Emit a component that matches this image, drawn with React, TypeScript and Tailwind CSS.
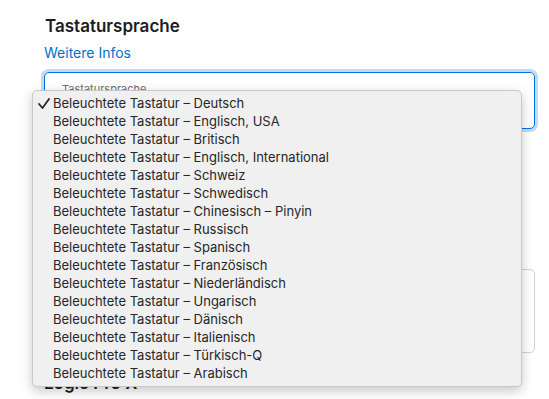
import React from 'react';

const items = [
  'Deutsch',
  'Englisch, USA',
  'Britisch',
  'Englisch, International',
  'Schweiz',
  'Schwedisch',
  'Chinesisch – Pinyin',
  'Russisch',
  'Spanisch',
  'Französisch',
  'Niederländisch',
  'Ungarisch',
  'Dänisch',
  'Italienisch',
  'Türkisch-Q',
  'Arabisch',
];

export default function App() {
  return (
    <div className="relative w-[549px] h-[399px] overflow-hidden bg-white font-['Inter','Liberation_Sans',sans-serif]">
      {/* Page content */}
      <div className="pl-[44px] pr-[14px] pt-[15px]">
        <h2 className="text-[17px] leading-[22px] font-semibold text-[#1d1d1f] pl-px">Tastatursprache</h2>
        <a className="block mt-[7px] text-[14px] leading-[18px] text-[#0070c9]">Weitere Infos</a>

        {/* Select box */}
        <div className="mt-[10px] h-[57px] rounded-[5px] border border-[#0071e3] ring-[3px] ring-[#0071e3]/25 px-[17px] pt-[9px]">
          <div className="text-[11px] leading-[14px] text-[#6e6e73]">Tastatursprache</div>
        </div>

        {/* Second card, mostly hidden */}
        <div className="mt-[140px] h-[84px] rounded-[5px] border border-[#d2d2d7]" />

        <h2 className="mt-[19px] text-[17px] leading-[22px] font-semibold text-[#1d1d1f]">Logic Pro X</h2>
      </div>

      {/* Dropdown menu */}
      <div className="absolute left-[32px] top-[90px] w-[490px] rounded-[5px] border border-[#c8c8c8] bg-[#f0f0f0] shadow-[0_4px_12px_rgba(0,0,0,0.22)] pt-[3px] pb-[4px]">
        {items.map((name, i) => (
          <div key={name} className="flex items-center h-[18px] text-[13px] leading-[18px] text-[#262626]">
            <span className="flex w-[20px] pl-[5px]">
              {i === 0 && (
                <svg width="12" height="11" viewBox="0 0 12 11" fill="none">
                  <path d="M1 6 L4.5 10 L11 1" stroke="#262626" strokeWidth="1.8" strokeLinecap="round" strokeLinejoin="round" />
                </svg>
              )}
            </span>
            <span>Beleuchtete Tastatur – {name}</span>
          </div>
        ))}
      </div>
    </div>
  );
}
